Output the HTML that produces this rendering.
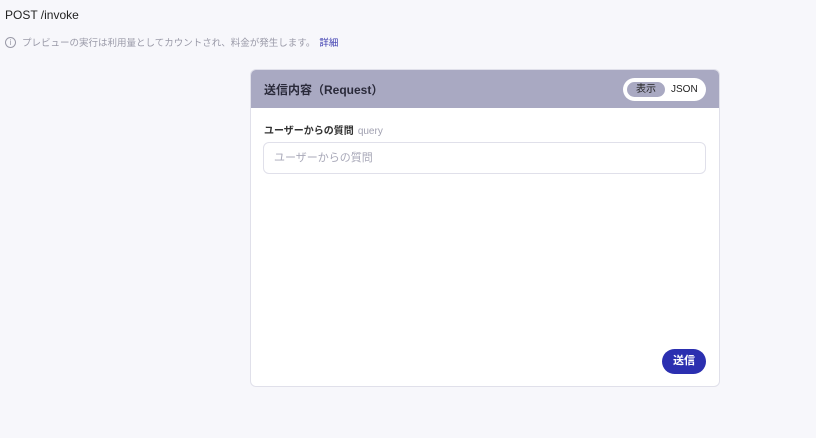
<!DOCTYPE html>
<html><head><meta charset="utf-8"><style>
*{box-sizing:border-box;margin:0;padding:0}
body{width:816px;height:438px;overflow:hidden;background:#f7f7fb;font-family:"Liberation Sans","Noto Sans CJK JP",sans-serif;position:relative}
.t{position:absolute;left:5px;top:8px;font-size:12px;color:#222}
.n{position:absolute;left:5px;top:35px;font-size:9.5px;color:#9a9aa8;display:flex;align-items:center}
.n i{display:inline-block;width:11px;height:11px;border:1px solid #9a9aa8;border-radius:50%;font-style:normal;font-size:8px;text-align:center;line-height:9px;margin-right:6px}
.n a{color:#3d3db0;margin-left:4px}
.card{position:absolute;left:250px;top:69px;width:470px;height:318px;background:#fff;border:1px solid #e0e0ea;border-radius:6px;overflow:hidden}
.hd{height:38px;background:#a9a9c2;display:flex;align-items:center;padding-left:13px;font-size:12px;font-weight:bold;color:#2a2a3a;position:relative}
.tg{position:absolute;right:13px;top:8px;width:83px;height:23px;background:#fff;border-radius:12px}
.tg .a{position:absolute;left:4px;top:4px;width:38px;height:15px;background:#a9a9c2;border-radius:8px;font-size:10px;font-weight:normal;text-align:center;line-height:15px;color:#222}
.tg .b{position:absolute;left:48px;top:4px;font-size:10px;line-height:15px;color:#222;font-weight:normal}
.lb{position:absolute;left:13px;top:52px;font-size:10px;color:#333;font-weight:bold}
.lb span{color:#a0a0b0;font-weight:normal;margin-left:4px}
.in{position:absolute;left:12px;top:72px;width:443px;height:32px;border:1px solid #e0e0ea;border-radius:6px;font-size:11px;color:#a8a8b8;padding-left:10px;line-height:30px}
.bt{position:absolute;left:411px;top:279px;width:44px;height:25px;background:#2b2fb0;border-radius:13px;color:#fff;font-size:11px;font-weight:bold;text-align:center;line-height:25px}
</style></head><body>
<div class="t">POST /invoke</div>
<div class="n"><i>i</i>プレビューの実行は利用量としてカウントされ、料金が発生します。<a>詳細</a></div>
<div class="card">
<div class="hd">送信内容（Request）<div class="tg"><div class="a">表示</div><div class="b">JSON</div></div></div>
<div class="lb">ユーザーからの質問<span>query</span></div>
<div class="in">ユーザーからの質問</div>
<div class="bt">送信</div>
</div>
</body></html>
